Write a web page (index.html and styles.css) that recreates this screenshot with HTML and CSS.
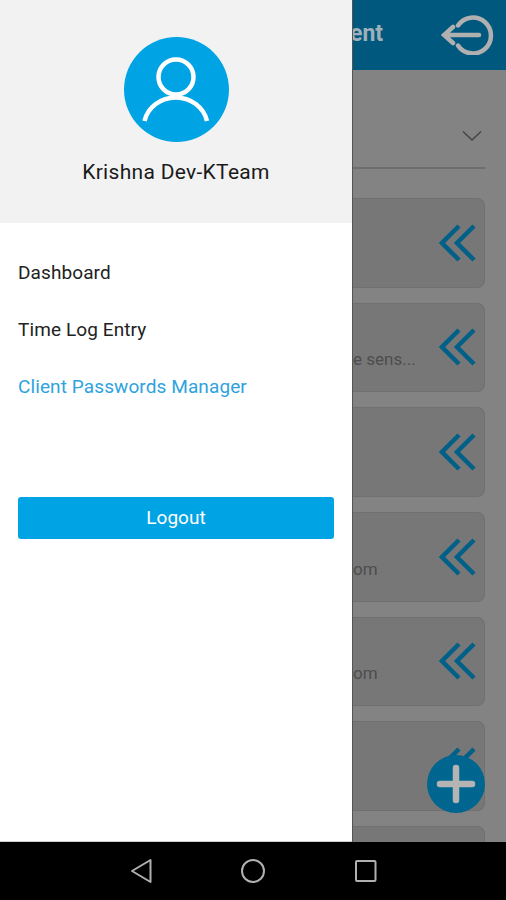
FILE: index.html
```html
<!DOCTYPE html>
<html lang="en">
<head>
  <meta charset="UTF-8">
  <meta name="viewport" content="width=device-width, initial-scale=1.0">
  <title>Client Passwords Manager</title>
  <link rel="stylesheet" href="styles.css">
</head>
<body>
  <svg class="defs" width="0" height="0">
    <symbol id="chevrons" viewBox="0 0 38 38">
      <path d="M20 2 3 19l17 17M35 2 18 19l17 17" fill="none" stroke="currentColor" stroke-width="4.500"/>
    </symbol>
  </svg>
  <div class="screen">
    <aside class="drawer">
      <div class="profile">
        <div class="avatar">
          <svg width="105" height="105" viewBox="0 0 105 105" fill="none" stroke="#fff" stroke-width="4.500">
            <circle cx="52" cy="40" r="17.500"/>
            <path d="M20.500 84A32 30 0 0 1 83 84"/>
          </svg>
        </div>
        <div class="username">Krishna Dev-KTeam</div>
      </div>
      <nav class="menu">
        <a class="menu-item">Dashboard</a>
        <a class="menu-item">Time Log Entry</a>
        <a class="menu-item active">Client Passwords Manager</a>
      </nav>
      <button class="logout">Logout</button>
    </aside>
    <main class="content">
      <header class="topbar">
        <span class="title">ent</span>
        <svg class="exit-icon" width="54" height="40" viewBox="0 0 54 40" fill="none" stroke="#b0b0b0" stroke-width="4.500" stroke-linecap="round">
          <path d="M17 10.500A18 18 0 1 1 17 30.500"/>
          <path d="M4 20h34M12 12l-9 8 9 8"/>
        </svg>
      </header>
      <div class="filter">
        <svg width="20" height="12" viewBox="0 0 20 12" fill="none" stroke="#444" stroke-width="1.500">
          <path d="M1 1.500 10 10l9-8.500"/>
        </svg>
      </div>
      <div class="cards">
        <div class="card"><svg class="go"><use href="#chevrons"/></svg></div>
        <div class="card"><span class="card-text">e sens...</span><svg class="go"><use href="#chevrons"/></svg></div>
        <div class="card"><svg class="go"><use href="#chevrons"/></svg></div>
        <div class="card"><span class="card-text">om</span><svg class="go"><use href="#chevrons"/></svg></div>
        <div class="card"><span class="card-text">om</span><svg class="go"><use href="#chevrons"/></svg></div>
        <div class="card"><svg class="go"><use href="#chevrons"/></svg></div>
        <div class="card"></div>
      </div>
      <div class="fab">
        <svg width="40" height="40" viewBox="0 0 40 40" stroke="#b4b4b4" stroke-width="6.500" stroke-linecap="round">
          <path d="M20 4v32M4 20h32"/>
        </svg>
      </div>
    </main>
  </div>
  <footer class="navbar">
    <svg width="24" height="26" viewBox="0 0 24 26" fill="none" stroke="#b0b0b0" stroke-width="2" stroke-linejoin="round">
      <path d="M21.500 2v22L3 13z"/>
    </svg>
    <svg width="24" height="26" viewBox="0 0 24 26" fill="none" stroke="#b0b0b0" stroke-width="2">
      <circle cx="12" cy="13" r="11"/>
    </svg>
    <svg width="24" height="26" viewBox="0 0 24 26" fill="none" stroke="#b0b0b0" stroke-width="2" stroke-linejoin="round">
      <rect x="3" y="3" width="19.500" height="20" rx="1"/>
    </svg>
  </footer>
</body>
</html>
```

FILE: styles.css
```css
* {
  box-sizing: border-box;
}
html, body {
  margin: 0;
  height: 100%;
  overflow: hidden;
}
body {
  display: flex;
  flex-direction: column;
  background: #000;
  font-family: Roboto, "Liberation Sans", sans-serif;
}
.defs {
  position: absolute;
}
.screen {
  display: flex;
  height: 842px;
}

/* drawer */
.drawer {
  width: 352px;
  flex-shrink: 0;
  background: #fff;
  border-bottom: 1px solid #ccc;
}
.profile {
  height: 223px;
  padding-top: 37px;
  background: #f2f2f2;
  text-align: center;
}
.avatar {
  width: 105px;
  height: 105px;
  margin: 0 auto;
  border-radius: 50%;
  background: #00a4e4;
}
.username {
  margin-top: 17px;
  font-size: 21px;
  line-height: 26px;
  letter-spacing: 0.3px;
  color: #1a1a1a;
}
.menu {
  display: flex;
  flex-direction: column;
  gap: 33px;
  padding: 38px 18px 0;
}
.menu-item {
  font-size: 19px;
  line-height: 24px;
  letter-spacing: 0.1px;
  color: #222;
}
.menu-item.active {
  color: #2ea3de;
}
.logout {
  display: block;
  width: 316px;
  height: 42px;
  margin: 98px 0 0 18px;
  padding: 0 0 2px;
  border: none;
  border-radius: 3px;
  background: #00a4e4;
  color: #fff;
  font-family: inherit;
  font-size: 19px;
}

/* page behind the drawer */
.content {
  position: relative;
  flex: 1;
  overflow: hidden;
  background: #838383;
  border-left: 1px solid #555;
}
.topbar {
  display: flex;
  justify-content: space-between;
  align-items: center;
  height: 70px;
  padding: 0 11px 0 0;
  background: #00587f;
}
.title {
  margin: 0 0 3px -3px;
  font-size: 23px;
  font-weight: 700;
  color: #9fb0b8;
}
.filter {
  display: flex;
  justify-content: flex-end;
  align-items: flex-end;
  height: 99px;
  width: 132px;
  padding: 0 3px 25px 0;
  border-bottom: 2px solid #6e6e6e;
}
.cards {
  display: flex;
  flex-direction: column;
  gap: 15px;
  width: 132px;
  margin-top: 29px;
}
.card {
  display: flex;
  align-items: center;
  flex-shrink: 0;
  height: 89.670px;
  padding-right: 7px;
  background: #777;
  border: 1px solid #707070;
  border-left: none;
  border-radius: 0 8px 8px 0;
}
.card-text {
  margin-top: 24px;
  font-size: 17px;
  color: #4d4d4d;
}
.go {
  width: 38px;
  height: 38px;
  margin-left: auto;
  color: #006088;
}
.fab {
  position: absolute;
  left: 74px;
  top: 755px;
  display: flex;
  align-items: center;
  justify-content: center;
  width: 58px;
  height: 58px;
  border-radius: 50%;
  background: #00668f;
}

/* android buttons */
.navbar {
  display: flex;
  justify-content: center;
  align-items: center;
  gap: 88px;
  height: 58px;
  background: #000;
}
```
